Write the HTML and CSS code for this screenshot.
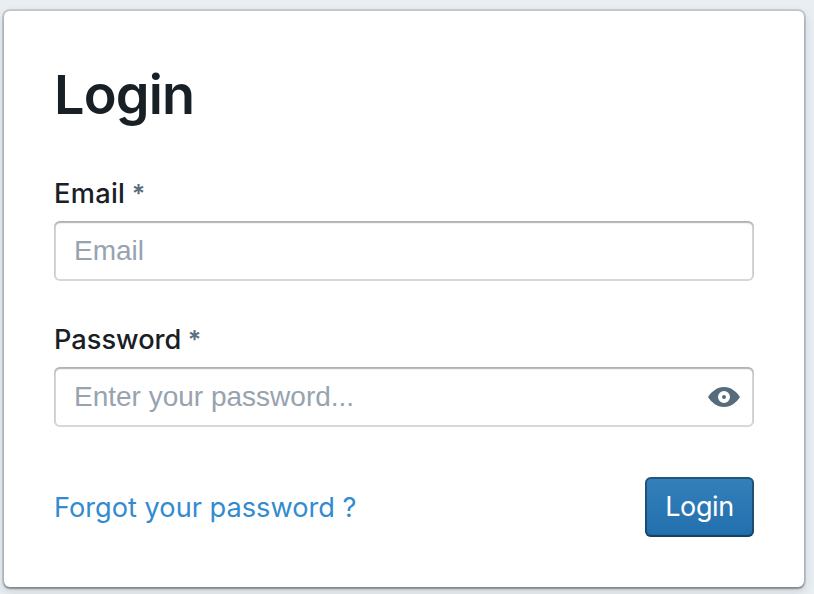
FILE: index.html
```html
<!DOCTYPE html>
<html lang="en">
<head>
<meta charset="utf-8">
<title>Login</title>
<link rel="stylesheet" href="styles.css">
</head>
<body>
<main class="card">
  <h1 class="title">Login</h1>
  <form class="form">
    <label class="label label-email" for="email">Email <span class="required">*</span></label>
    <div class="field"><input class="input" id="email" type="email" placeholder="Email"></div>
    <label class="label" for="password">Password <span class="required">*</span></label>
    <div class="field">
      <input class="input" id="password" type="password" placeholder="Enter your password...">
      <svg class="eye" viewBox="0 0 32 20" width="32" height="20"><path fill="#566b7c" fill-rule="evenodd" d="M0 10C3 5 9 0 16 0s13 5 16 10c-3 5-9 10-16 10S3 15 0 10zM16 4a6 6 0 1 0 0 12a6 6 0 1 0 0-12z"/><circle cx="16" cy="10" r="2" fill="#566b7c"/></svg>
    </div>
    <div class="actions">
      <a class="forgot" href="#">Forgot your password ?</a>
      <button class="submit" type="button">Login</button>
    </div>
  </form>
</main>
</body>
</html>
```
FILE: styles.css
```css
* { box-sizing: border-box; }
body { margin: 0; height: 594px; overflow: hidden; background: #e9eef3; color: #182026; font-family: Inter, sans-serif; font-size: 27.2px; }
.card { width: 800px; height: 576px; margin: 11px 0 0 4px; padding: 48px 50px 0; background: #fff; border-radius: 6px; box-shadow: 0 0 0 2px rgba(16,22,26,.15), 0 2px 2px rgba(16,22,26,.3), 0 4px 12px rgba(16,22,26,.14); }
.title { margin: 0; height: 72px; line-height: 71px; font-size: 54px; font-weight: 620; letter-spacing: -.8px; }
.form { padding-top: 44px; }
.label { display: block; height: 36px; line-height: 37px; margin-bottom: 10px; font-weight: 500; }
.label-email { letter-spacing: .3px; }
.required { margin-left: -1px; color: #5c7080; font-size: 25px; font-weight: 600; }
.field { display: flex; align-items: center; width: 700px; height: 60px; margin-bottom: 40px; padding: 0 14px 0 20px; border-radius: 6px; box-shadow: inset 0 0 0 2px rgba(16,22,26,.17), inset 0 2px 2px rgba(16,22,26,.2); }
.input { flex: 1; min-width: 0; padding: 0; border: 0; outline: 0; background: none; font: 28px "Liberation Sans", sans-serif; }
.input::placeholder { color: #97a3af; opacity: 1; }
.eye { flex: none; }
.actions { display: flex; justify-content: space-between; align-items: center; height: 60px; margin-top: 50px; }
.forgot { padding-top: 1px; color: #328bcf; text-decoration: none; }
.submit { width: 109px; height: 60px; padding: 0 0 2px; border: 0; border-radius: 6px; background: linear-gradient(#3480ba, #226fae); color: #fff; font: 27px Inter, sans-serif; letter-spacing: -.4px; box-shadow: inset 0 0 0 2px rgba(16,22,26,.4), inset 0 -2px 2px rgba(16,22,26,.2); }
```
